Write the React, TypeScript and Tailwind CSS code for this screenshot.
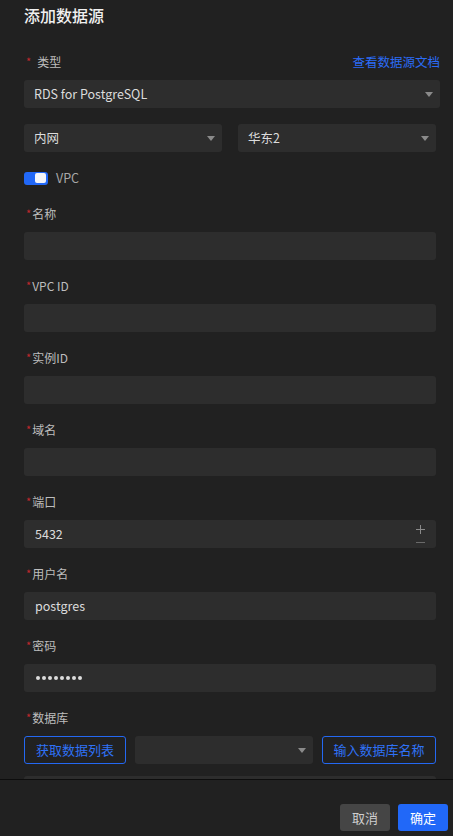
import React from "react"

const font = { fontFamily: '"Noto Sans CJK SC", "Noto Sans", sans-serif' }

function Caret() {
  return (
    <svg width="8" height="5" viewBox="0 0 8 5" className="shrink-0">
      <path d="M0 0 L8 0 L4 5 Z" fill="#8a8a8a" />
    </svg>
  )
}

function Label({ text, spaced }: { text: string; spaced?: boolean }) {
  return (
    <div className="h-[20px] flex items-center text-[12px] text-[#bdbdbd] leading-[20px]">
      <span className={`text-[#c0282d] text-[11px] ${spaced ? "ml-[2px] mr-[6px]" : "ml-[2px] mr-[1px]"} -translate-y-[1px]`}>*</span>
      <span>{text}</span>
    </div>
  )
}

function Select({ value, className = "" }: { value?: string; className?: string }) {
  return (
    <div className={`h-[28px] rounded-[3px] bg-[#2d2d2d] flex items-center justify-between pl-[10px] pr-[7px] ${className}`}>
      <span className="text-[12.5px] text-[#dcdcdc]">{value}</span>
      <Caret />
    </div>
  )
}

function Input({ value, children }: { value?: string; children?: React.ReactNode }) {
  return (
    <div className="h-[28px] mt-[8px] rounded-[3px] bg-[#2d2d2d] flex items-center justify-between pl-[11px] pr-[12px]">
      <span className="text-[12.5px] text-[#dcdcdc]">{value}</span>
      {children}
    </div>
  )
}

function Field({ label, value, children }: { label: string; value?: string; children?: React.ReactNode }) {
  return (
    <div className="mt-[16px]">
      <Label text={label} />
      <Input value={value}>{children}</Input>
    </div>
  )
}

export default function App() {
  return (
    <div className="w-full h-[836px] bg-[#212121] flex flex-col overflow-hidden" style={font}>
      <div className="h-[779px] overflow-hidden pl-[24px] pr-[17px] pt-[3px]">
        <h2 className="text-[16px] leading-[24px] font-medium text-[#f0f0f0]">添加数据源</h2>

        <div className="mt-[25px] flex items-center justify-between -mr-[4px]">
          <Label text="类型" spaced />
          <a className="text-[12.5px] text-[#2b6cf6] leading-[20px]">查看数据源文档</a>
        </div>
        <Select value="RDS for PostgreSQL" className="mt-[8px] -mr-[4px] pr-[4px]" />

        <div className="mt-[16px] grid grid-cols-2 gap-[16px]">
          <Select value="内网" />
          <Select value="华东2" />
        </div>

        <div className="mt-[16px] h-[20px] flex items-center gap-[8px]">
          <div className="w-[24px] h-[13px] rounded-[3px] bg-[#2168f8] flex items-center justify-end pr-[2px]">
            <div className="w-[11px] h-[10px] rounded-[2px] bg-[#f4f6fb]" />
          </div>
          <span className="text-[12.5px] text-[#a8a8a8]">VPC</span>
        </div>

        <Field label="名称" />
        <Field label="VPC ID" />
        <Field label="实例ID" />
        <Field label="域名" />
        <Field label="端口" value="5432">
          <div className="flex flex-col items-center justify-center gap-[8px] -mr-[1px]">
            <svg width="9" height="9" viewBox="0 0 9 9">
              <path d="M4.5 0 V9 M0 4.5 H9" stroke="#8a8a8a" strokeWidth="1" />
            </svg>
            <svg width="9" height="1" viewBox="0 0 9 1">
              <path d="M0 0.5 H9" stroke="#6a6a6a" strokeWidth="1" />
            </svg>
          </div>
        </Field>
        <Field label="用户名" value="postgres" />
        <div className="mt-[16px]">
          <Label text="密码" />
          <div className="h-[28px] mt-[8px] rounded-[3px] bg-[#2d2d2d] flex items-center pl-[12px] gap-[2px]">
            {Array.from({ length: 8 }).map((_, i) => (
              <span key={i} className="w-[4px] h-[4px] rounded-full bg-[#dcdcdc]" />
            ))}
          </div>
        </div>

        <div className="mt-[16px]">
          <Label text="数据库" />
          <div className="mt-[8px] flex items-center gap-[9px]">
            <button className="h-[28px] w-[102px] rounded-[3px] border border-[#2468f2] text-[13px] text-[#2f72f7] shrink-0">
              获取数据列表
            </button>
            <Select className="w-[178px] shrink-0" />
            <button className="h-[28px] flex-1 rounded-[3px] border border-[#2468f2] text-[13px] text-[#2f72f7]">
              输入数据库名称
            </button>
          </div>
          <div className="mt-[12px] h-[28px] rounded-[3px] bg-[#2d2d2d]" />
        </div>
      </div>

      <div className="flex-1 border-t border-[#0d0d0d] flex justify-end items-start gap-[8px] pt-[24px] pr-[5px]">
        <button className="w-[50px] h-[27px] rounded-[3px] bg-[#454545] text-[13px] text-[#cfcfcf]">取消</button>
        <button className="w-[50px] h-[27px] rounded-[3px] bg-[#2168f8] text-[13px] text-white">确定</button>
      </div>
    </div>
  )
}
